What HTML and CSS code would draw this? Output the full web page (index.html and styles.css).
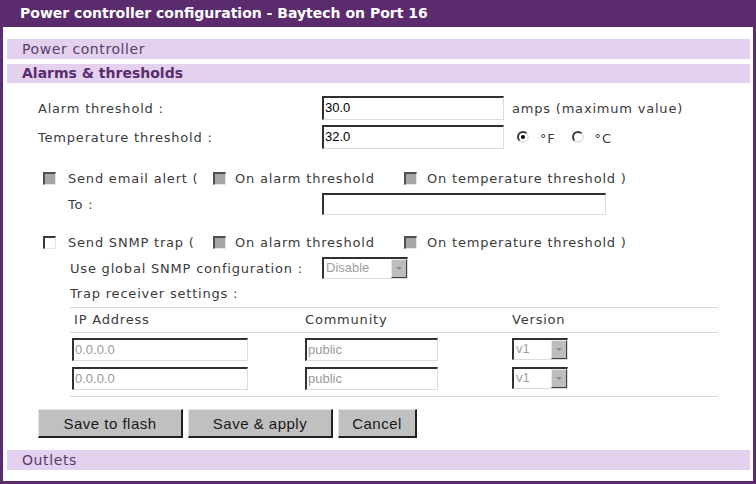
FILE: index.html
```html
<!DOCTYPE html>
<html>
<head>
<meta charset="utf-8">
<title>Power controller configuration</title>
<link rel="stylesheet" href="styles.css">
</head>
<body>
<div class="window">
  <div class="titlebar">Power controller configuration - Baytech on Port 16</div>
  <div class="main">
    <div class="section">Power controller</div>
    <div class="section active">Alarms &amp; thresholds</div>
    <div class="form">
      <div class="row thr first">
        <span class="label">Alarm threshold :</span>
        <span class="input w182">30.0</span>
        <span class="unit">amps (maximum value)</span>
      </div>
      <div class="row thr">
        <span class="label">Temperature threshold :</span>
        <span class="input w182">32.0</span>
        <span class="radios">
          <span class="radio checked"></span><span class="rlabel">°F</span>
          <span class="radio"></span><span class="rlabel">°C</span>
        </span>
      </div>
      <div class="row chk email">
        <span class="cb disabled"></span><span class="ctext">Send email alert (</span>
        <span class="cb disabled"></span><span class="ctext">On alarm threshold</span>
        <span class="cb disabled"></span><span class="ctext">On temperature threshold )</span>
      </div>
      <div class="row to">
        <span class="label sub">To :</span>
        <span class="input w284"></span>
      </div>
      <div class="row chk snmp">
        <span class="cb"></span><span class="ctext">Send SNMP trap (</span>
        <span class="cb disabled"></span><span class="ctext">On alarm threshold</span>
        <span class="cb disabled"></span><span class="ctext">On temperature threshold )</span>
      </div>
      <div class="row global">
        <span class="label sub2">Use global SNMP configuration :</span>
        <span class="select w86"><span class="sval">Disable</span><span class="sbtn"></span></span>
      </div>
      <div class="row trap">
        <span class="label sub2">Trap receiver settings :</span>
      </div>
      <div class="traptable">
        <div class="trow head">
          <span>IP Address</span><span>Community</span><span>Version</span>
        </div>
        <div class="trow data">
          <span><span class="input dis w176">0.0.0.0</span></span>
          <span><span class="input dis w133">public</span></span>
          <span><span class="select w56"><span class="sval">v1</span><span class="sbtn"></span></span></span>
        </div>
        <div class="trow data last">
          <span><span class="input dis w176">0.0.0.0</span></span>
          <span><span class="input dis w133">public</span></span>
          <span><span class="select w56"><span class="sval">v1</span><span class="sbtn"></span></span></span>
        </div>
      </div>
      <div class="buttons">
        <button class="btn b1">Save to flash</button>
        <button class="btn b2">Save &amp; apply</button>
        <button class="btn b3">Cancel</button>
      </div>
    </div>
    <div class="section">Outlets</div>
  </div>
</div>
</body>
</html>
```

FILE: styles.css
```css
html, body {
  margin: 0;
  padding: 0;
  background: #ffffff;
}
body {
  font-family: "DejaVu Sans", Verdana, sans-serif;
  font-size: 13px;
  letter-spacing: 0.8px;
  color: #3a3a3a;
}
.window {
  width: 756px;
  height: 484px;
  box-sizing: border-box;
  border: 3px solid #5a2c6e;
  border-top: none;
  background: #ffffff;
  display: flex;
  flex-direction: column;
}
.titlebar {
  height: 27px;
  line-height: 26px;
  background: #5a2c6e;
  color: #ffffff;
  font-weight: bold;
  font-size: 14px;
  letter-spacing: 0;
  margin: 0 -3px;
  padding-left: 20px;
  white-space: nowrap;
}
.main {
  padding: 12px 3px 0 4px;
  display: flex;
  flex-direction: column;
}
.section {
  height: 20px;
  line-height: 20px;
  background: #e3d1ee;
  color: #5a3c6c;
  font-size: 14px;
  letter-spacing: 0.6px;
  padding-left: 15px;
  margin-bottom: 5px;
}
.section.active {
  font-weight: bold;
  letter-spacing: 0;
  color: #5a2c6e;
  margin-bottom: 0;
  height: 19px;
  line-height: 19px;
}
.form {
  padding-left: 31px;
  padding-top: 13px;
  height: 354px;
  display: flex;
  flex-direction: column;
}
.row {
  display: flex;
  align-items: center;
  white-space: nowrap;
}
.label {
  width: 284px;
  flex: none;
}
.label.sub {
  padding-left: 30px;
  width: 254px;
}
.label.sub2 {
  padding-left: 32px;
  width: 252px;
}
.row.thr {
  height: 24px;
}
.row.thr + .row.thr {
  margin-top: 5px;
}
.input {
  display: inline-block;
  box-sizing: border-box;
  height: 24px;
  border-top: 2px solid #303030;
  border-left: 2px solid #303030;
  border-right: 1px solid #dcdcdc;
  border-bottom: 1px solid #dcdcdc;
  background: #ffffff;
  font-family: "Liberation Sans", Arial, sans-serif;
  font-size: 13px;
  letter-spacing: 0;
  line-height: 20px;
  padding-left: 1px;
  color: #000000;
}
.input.dis {
  color: #9a9a9a;
  height: 23px;
}
.w182 { width: 182px; }
.w284 { width: 284px; height: 22px; }
.w176 { width: 176px; }
.w133 { width: 133px; }
.unit {
  margin-left: 8px;
}
.radios {
  display: flex;
  align-items: center;
  margin-left: 13px;
}
.radio {
  width: 12px;
  height: 12px;
  box-sizing: border-box;
  border-radius: 50%;
  border: 2px solid #e6e6e6;
  border-top-color: #3a3a3a;
  border-left-color: #3a3a3a;
  background: #ffffff;
  position: relative;
}
.radio.checked::after {
  content: "";
  position: absolute;
  left: 2px;
  top: 2px;
  width: 4px;
  height: 4px;
  border-radius: 50%;
  background: #000000;
}
.rlabel {
  margin-left: 11px;
  margin-right: 16px;
  font-size: 13px;
  padding-top: 3px;
}
.row.chk {
  height: 20px;
  display: grid;
  grid-template-columns: 5px 13px 12px 145px 13px 9px 169px 13px 10px auto;
}
.row.chk .cb:nth-child(1) { grid-column: 2; }
.row.chk .ctext:nth-child(2) { grid-column: 4; }
.row.chk .cb:nth-child(3) { grid-column: 5; }
.row.chk .ctext:nth-child(4) { grid-column: 7; }
.row.chk .cb:nth-child(5) { grid-column: 8; }
.row.chk .ctext:nth-child(6) { grid-column: 10; }
.row.email {
  margin-top: 19px;
}
.cb {
  display: block;
  width: 13px;
  height: 13px;
  box-sizing: border-box;
  border-top: 2px solid #3a3a3a;
  border-left: 2px solid #3a3a3a;
  border-right: 1px solid #e6e6e6;
  border-bottom: 1px solid #e6e6e6;
  background: #ffffff;
}
.cb.disabled {
  background: #a6a6a6;
  border-top-color: #505050;
  border-left-color: #505050;
}
.row.to {
  margin-top: 5px;
  height: 22px;
}
.row.snmp {
  margin-top: 17px;
}
.row.global {
  margin-top: 5px;
  height: 22px;
}
.select {
  display: inline-flex;
  box-sizing: border-box;
  height: 22px;
  border-top: 2px solid #303030;
  border-left: 2px solid #303030;
  border-right: 1px solid #dcdcdc;
  border-bottom: 1px solid #dcdcdc;
  background: #ffffff;
  font-family: "Liberation Sans", Arial, sans-serif;
  font-size: 13px;
  letter-spacing: 0;
  color: #a0a0a0;
}
.w86 { width: 86px; }
.w56 { width: 56px; }
.sval {
  flex: 1;
  line-height: 18px;
  padding-left: 2px;
}
.sbtn {
  width: 16px;
  flex: none;
  background: #bdbdbd;
  border-right: 1px solid #404040;
  border-bottom: 1px solid #404040;
  border-top: 1px solid #e8e8e8;
  border-left: 1px solid #e8e8e8;
  box-sizing: border-box;
  position: relative;
}
.sbtn::after {
  content: "";
  position: absolute;
  left: 4px;
  top: 7px;
  border-left: 3px solid transparent;
  border-right: 3px solid transparent;
  border-top: 3px solid #8a8a8a;
}
.row.trap {
  margin-top: 4px;
  height: 20px;
}
.traptable {
  margin-top: 4px;
  margin-left: 32px;
  width: 648px;
  border-top: 1px solid #dcd2e6;
  border-bottom: 1px solid #dcd2e6;
}
.trow {
  display: grid;
  grid-template-columns: 235px 207px auto;
}
.trow.head {
  height: 24px;
  line-height: 24px;
  border-bottom: 1px solid #dcd2e6;
  padding-left: 4px;
  grid-template-columns: 231px 207px auto;
}
.trow.data {
  padding-left: 2px;
  grid-template-columns: 233px 207px auto;
  margin-top: 5px;
  height: 24px;
}
.trow.data.last {
  margin-top: 5px;
  height: 29px;
}
.buttons {
  margin-top: 12px;
  display: flex;
  gap: 5px;
}
.btn {
  height: 29px;
  box-sizing: border-box;
  background: #c0c0c0;
  border-top: 1px solid #e4e4e4;
  border-left: 1px solid #e4e4e4;
  border-right: 2px solid #202020;
  border-bottom: 2px solid #202020;
  font-family: "Liberation Sans", Arial, sans-serif;
  font-size: 15px;
  letter-spacing: 0.5px;
  color: #1a1a1a;
  padding: 0;
  margin: 0;
}
.b1 { width: 145px; }
.b2 { width: 145px; }
.b3 { width: 79px; }
```
